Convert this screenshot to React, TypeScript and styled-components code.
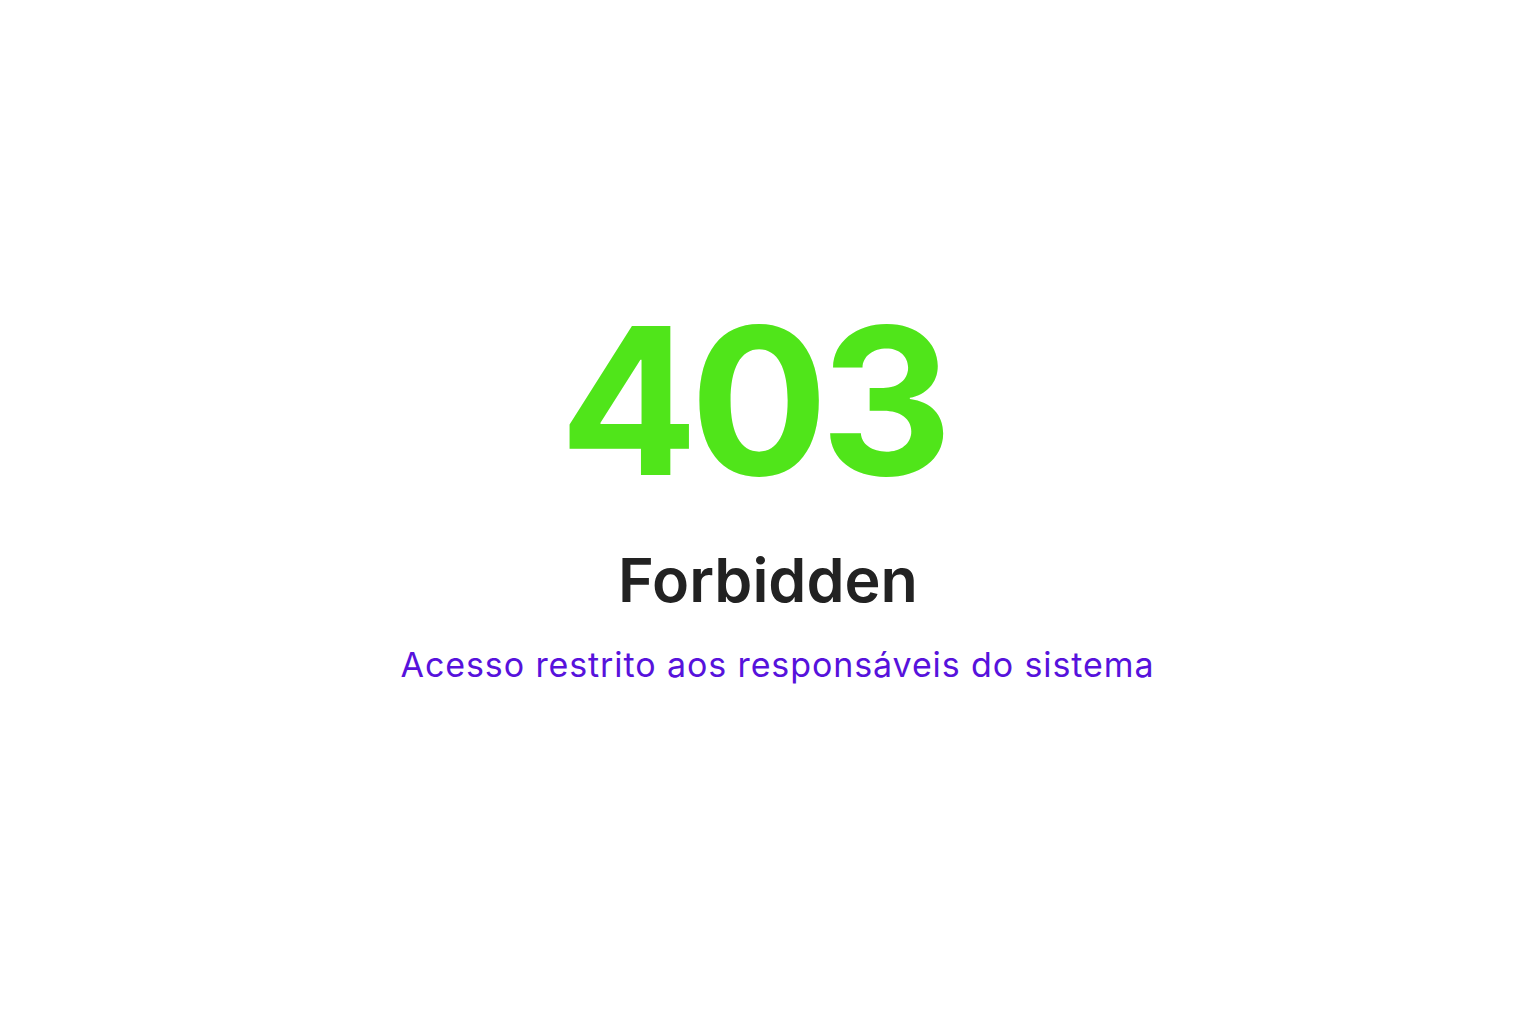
import React from "react";
import styled, { createGlobalStyle } from "styled-components";

const Global = createGlobalStyle`
  html, body { margin: 0; padding: 0; background: #ffffff; }
  body { font-family: Inter, "Noto Sans", sans-serif; }
`;

const Page = styled.main`
  height: 100vh;
  box-sizing: border-box;
  padding-bottom: 44px;
  display: flex;
  flex-direction: column;
  align-items: center;
  justify-content: center;
  text-align: center;
`;

const Code = styled.h1`
  margin: 0;
  padding-right: 32px;
  font-size: 205px;
  line-height: 1;
  font-weight: 700;
  color: #50e51a;
  letter-spacing: -8px;
`;

const Title = styled.h2`
  margin: 47px 0 0;
  font-size: 61px;
  line-height: 1;
  font-weight: 600;
  color: #222222;
`;

const Subtitle = styled.p`
  margin: 37px 0 0;
  padding-left: 19px;
  font-size: 34px;
  line-height: 1;
  font-weight: 400;
  letter-spacing: 0.9px;
  color: #5712dc;
`;

export default function App() {
  return (
    <>
      <Global />
      <Page>
        <Code>403</Code>
        <Title>Forbidden</Title>
        <Subtitle>Acesso restrito aos responsáveis do sistema</Subtitle>
      </Page>
    </>
  );
}
